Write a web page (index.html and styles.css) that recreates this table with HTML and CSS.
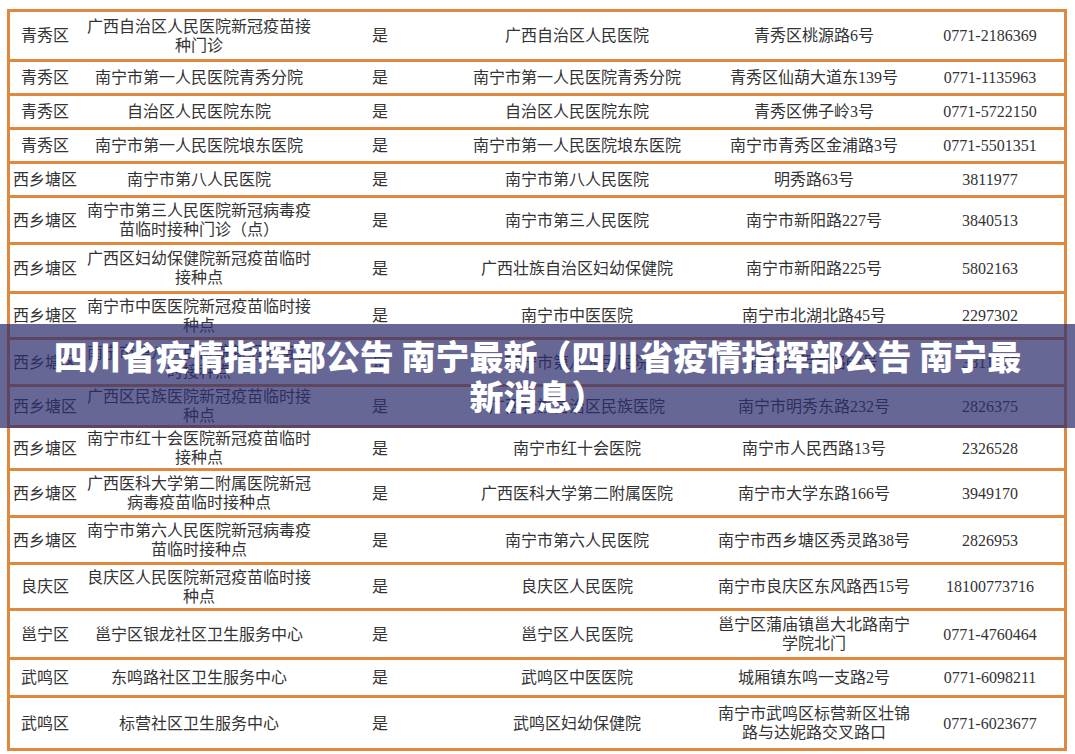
FILE: index.html
```html
<!DOCTYPE html>
<html lang="zh-CN">
<head>
<meta charset="utf-8">
<title>南宁新冠疫苗接种点</title>
<link rel="stylesheet" href="styles.css">
</head>
<body>
<div class="sheet">
  <div class="row h50">
    <div class="cell">青秀区</div><div class="cell">广西自治区人民医院新冠疫苗接种门诊</div><div class="cell">是</div><div class="cell">广西自治区人民医院</div><div class="cell">青秀区桃源路6号</div><div class="cell">0771-2186369</div>
  </div>
  <div class="row h34">
    <div class="cell">青秀区</div><div class="cell">南宁市第一人民医院青秀分院</div><div class="cell">是</div><div class="cell">南宁市第一人民医院青秀分院</div><div class="cell">青秀区仙葫大道东139号</div><div class="cell">0771-1135963</div>
  </div>
  <div class="row h34">
    <div class="cell">青秀区</div><div class="cell">自治区人民医院东院</div><div class="cell">是</div><div class="cell">自治区人民医院东院</div><div class="cell">青秀区佛子岭3号</div><div class="cell">0771-5722150</div>
  </div>
  <div class="row h34">
    <div class="cell">青秀区</div><div class="cell">南宁市第一人民医院埌东医院</div><div class="cell">是</div><div class="cell">南宁市第一人民医院埌东医院</div><div class="cell">南宁市青秀区金浦路3号</div><div class="cell">0771-5501351</div>
  </div>
  <div class="row h34">
    <div class="cell">西乡塘区</div><div class="cell">南宁市第八人民医院</div><div class="cell">是</div><div class="cell">南宁市第八人民医院</div><div class="cell">明秀路63号</div><div class="cell">3811977</div>
  </div>
  <div class="row h47">
    <div class="cell">西乡塘区</div><div class="cell">南宁市第三人民医院新冠病毒疫苗临时接种门诊（点）</div><div class="cell">是</div><div class="cell">南宁市第三人民医院</div><div class="cell">南宁市新阳路227号</div><div class="cell">3840513</div>
  </div>
  <div class="row h49">
    <div class="cell">西乡塘区</div><div class="cell">广西区妇幼保健院新冠疫苗临时接种点</div><div class="cell">是</div><div class="cell">广西壮族自治区妇幼保健院</div><div class="cell">南宁市新阳路225号</div><div class="cell">5802163</div>
  </div>
  <div class="row h46">
    <div class="cell">西乡塘区</div><div class="cell">南宁市中医医院新冠疫苗临时接种点</div><div class="cell">是</div><div class="cell">南宁市中医医院</div><div class="cell">南宁市北湖北路45号</div><div class="cell">2297302</div>
  </div>
  <div class="row h47">
    <div class="cell">西乡塘区</div><div class="cell">南宁市第八人民医院新冠疫苗临时接种点</div><div class="cell">是</div><div class="cell">南宁市第八人民医院</div><div class="cell">南宁市明秀路63号</div><div class="cell">3811977</div>
  </div>
  <div class="row h41">
    <div class="cell">西乡塘区</div><div class="cell">广西区民族医院新冠疫苗临时接种点</div><div class="cell">是</div><div class="cell">广西壮族自治区民族医院</div><div class="cell">南宁市明秀东路232号</div><div class="cell">2826375</div>
  </div>
  <div class="row h43">
    <div class="cell">西乡塘区</div><div class="cell">南宁市红十会医院新冠疫苗临时接种点</div><div class="cell">是</div><div class="cell">南宁市红十会医院</div><div class="cell">南宁市人民西路13号</div><div class="cell">2326528</div>
  </div>
  <div class="row h47">
    <div class="cell">西乡塘区</div><div class="cell">广西医科大学第二附属医院新冠病毒疫苗临时接种点</div><div class="cell">是</div><div class="cell">广西医科大学第二附属医院</div><div class="cell">南宁市大学东路166号</div><div class="cell">3949170</div>
  </div>
  <div class="row h47">
    <div class="cell">西乡塘区</div><div class="cell">南宁市第六人民医院新冠病毒疫苗临时接种点</div><div class="cell">是</div><div class="cell">南宁市第六人民医院</div><div class="cell">南宁市西乡塘区秀灵路38号</div><div class="cell">2826953</div>
  </div>
  <div class="row h46">
    <div class="cell">良庆区</div><div class="cell">良庆区人民医院新冠疫苗临时接种点</div><div class="cell">是</div><div class="cell">良庆区人民医院</div><div class="cell">南宁市良庆区东风路西15号</div><div class="cell">18100773716</div>
  </div>
  <div class="row h49">
    <div class="cell">邕宁区</div><div class="cell">邕宁区银龙社区卫生服务中心</div><div class="cell">是</div><div class="cell">邕宁区人民医院</div><div class="cell">邕宁区蒲庙镇邕大北路南宁学院北门</div><div class="cell">0771-4760464</div>
  </div>
  <div class="row h38">
    <div class="cell">武鸣区</div><div class="cell">东鸣路社区卫生服务中心</div><div class="cell">是</div><div class="cell">武鸣区中医医院</div><div class="cell">城厢镇东鸣一支路2号</div><div class="cell">0771-6098211</div>
  </div>
  <div class="row h53">
    <div class="cell">武鸣区</div><div class="cell">标营社区卫生服务中心</div><div class="cell">是</div><div class="cell">武鸣区妇幼保健院</div><div class="cell">南宁市武鸣区标营新区壮锦路与达妮路交叉路口</div><div class="cell">0771-6023677</div>
  </div>
</div>
<div class="banner">
  <h1 class="banner-title">四川省疫情指挥部公告 南宁最新（四川省疫情指挥部公告 南宁最新消息）</h1>
</div>
</body>
</html>
```
FILE: styles.css
```css
* {
  box-sizing: border-box;
}

html, body {
  margin: 0;
  padding: 0;
  background: #ffffff;
}

body {
  width: 1075px;
  height: 754px;
  overflow: hidden;
  font-family: "Liberation Serif", "Noto Sans CJK SC", serif;
  font-size: 16px;
  color: #333333;
}

.sheet {
  margin: 9px 0 0 7px;
  width: 1060px;
  border: 3px solid #e0883e;
  border-bottom: none;
}

.row {
  display: grid;
  grid-template-columns: 70px 238px 124px 270px 204px 148px;
  border-bottom: 3px solid #e0883e;
}

.h34 { min-height: 34px; }
.h38 { min-height: 38px; }
.h41 { min-height: 41px; }
.h43 { min-height: 43px; }
.h46 { min-height: 46px; }
.h47 { min-height: 47px; }
.h49 { min-height: 49px; }
.h50 { min-height: 50px; }
.h53 { min-height: 53px; }

.cell {
  display: flex;
  align-items: center;
  justify-content: center;
  text-align: center;
  padding: 0 2px;
  line-height: 19px;
}

.banner {
  position: absolute;
  top: 324px;
  left: 0;
  width: 1075px;
  height: 104px;
  background: rgba(45, 45, 110, 0.72);
  display: flex;
  align-items: center;
  justify-content: center;
  padding: 0 40px;
}

.banner-title {
  margin: 0;
  font-family: "Noto Sans CJK SC", "Noto Sans", sans-serif;
  font-weight: 900;
  font-size: 34px;
  line-height: 40px;
  color: #ffffff;
  text-align: center;
}
```
